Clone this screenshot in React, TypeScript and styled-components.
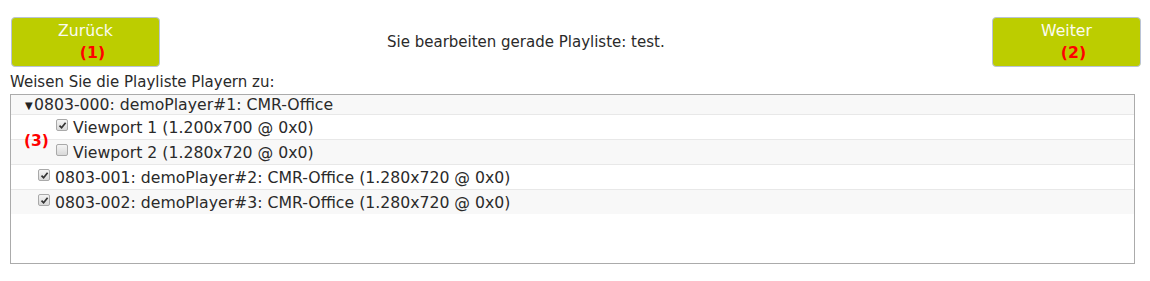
import React from "react";
import styled, { createGlobalStyle } from "styled-components";

const Global = createGlobalStyle`
  html, body { margin: 0; padding: 0; background: #fff; }
  body { font-family: "DejaVu Sans", Verdana, sans-serif; font-size: 15px; color: #2a2a2a; }
`;

const Page = styled.div`
  padding: 17px 10px 0 10px;
  width: 1131px;
`;

const Header = styled.div`
  display: flex;
  align-items: center;
  height: 50px;
`;

const NavButton = styled.button<{ $ml?: number }>`
  box-sizing: border-box;
  width: 149px;
  height: 50px;
  margin-left: ${(p) => p.$ml ?? 0}px;
  background: #bccd00;
  border: 1px solid #b9c3d6;
  border-radius: 4px;
  color: #fbfbf0;
  font-family: "DejaVu Sans", Verdana, sans-serif;
  font-size: 15.7px;
  line-height: 22px;
  padding: 2px 0 0 0;
  display: flex;
  flex-direction: column;
  align-items: center;
  justify-content: flex-start;
  cursor: pointer;
`;

const Marker = styled.span`
  color: #ff0000;
  font-weight: bold;
  padding-left: 14px;
`;

const Info = styled.div`
  flex: 1;
  padding-left: 227px;
  font-size: 15px;
  color: #2a2a2a;
`;

const Title = styled.div`
  margin-top: 7px;
  line-height: 16px;
  font-size: 15px;
  color: #2a2a2a;
`;

const TreeBox = styled.div`
  box-sizing: border-box;
  width: 1125px;
  height: 170px;
  margin-top: 4px;
  border: 1px solid #ababab;
  position: relative;
  font-size: 15.7px;
`;

const Row = styled.div<{ $alt?: boolean; $first?: boolean; $indent: number }>`
  display: flex;
  align-items: center;
  height: ${(p) => (p.$first ? 19 : 24)}px;
  border-top: ${(p) => (p.$first ? "none" : "1px solid #e8e8e8")};
  background: ${(p) => (p.$alt ? "#f8f8f8" : "#fff")};
  padding-left: ${(p) => p.$indent}px;
  white-space: nowrap;
`;

const Toggle = styled.span`
  font-size: 10px;
  width: 9px;
  margin-right: 0;
  color: #222;
  display: inline-block;
  transform: translateY(1px);
`;

const Check = styled.span<{ $on?: boolean }>`
  box-sizing: border-box;
  width: 12px;
  height: 12px;
  margin-right: 5px;
  border: 1px solid #a9a9a9;
  border-radius: 2px;
  background: linear-gradient(#f4f4f4, #d9d9d9);
  display: inline-flex;
  align-items: center;
  justify-content: center;
  transform: translateY(-2px);
`;

const Label = styled.span`
  color: #2a2a2a;
`;

const Callout = styled.span`
  position: absolute;
  left: 13px;
  top: 37px;
  font-size: 15.5px;
  color: #ff0000;
  font-weight: bold;
`;

const Tick = () => (
  <svg width="9" height="9" viewBox="0 0 9 9">
    <path d="M1.5 4.6 L3.6 6.8 L7.6 1.8" fill="none" stroke="#333" strokeWidth="1.7" />
  </svg>
);

export default function App() {
  return (
    <>
      <Global />
      <Page>
        <Header>
          <NavButton $ml={1}>
            <span>Zurück</span>
            <Marker>(1)</Marker>
          </NavButton>
          <Info>Sie bearbeiten gerade Playliste: test.</Info>
          <NavButton>
            <span>Weiter</span>
            <Marker>(2)</Marker>
          </NavButton>
        </Header>
        <Title>Weisen Sie die Playliste Playern zu:</Title>
        <TreeBox>
          <Row $first $alt $indent={14}>
            <Toggle>▼</Toggle>
            <Label>0803-000: demoPlayer#1: CMR-Office</Label>
          </Row>
          <Row $indent={45}>
            <Check $on>
              <Tick />
            </Check>
            <Label>Viewport 1 (1.200x700 @ 0x0)</Label>
          </Row>
          <Row $alt $indent={45}>
            <Check />
            <Label>Viewport 2 (1.280x720 @ 0x0)</Label>
          </Row>
          <Row $indent={27}>
            <Check $on>
              <Tick />
            </Check>
            <Label>0803-001: demoPlayer#2: CMR-Office (1.280x720 @ 0x0)</Label>
          </Row>
          <Row $alt $indent={27}>
            <Check $on>
              <Tick />
            </Check>
            <Label>0803-002: demoPlayer#3: CMR-Office (1.280x720 @ 0x0)</Label>
          </Row>
          <Callout>(3)</Callout>
        </TreeBox>
      </Page>
    </>
  );
}
